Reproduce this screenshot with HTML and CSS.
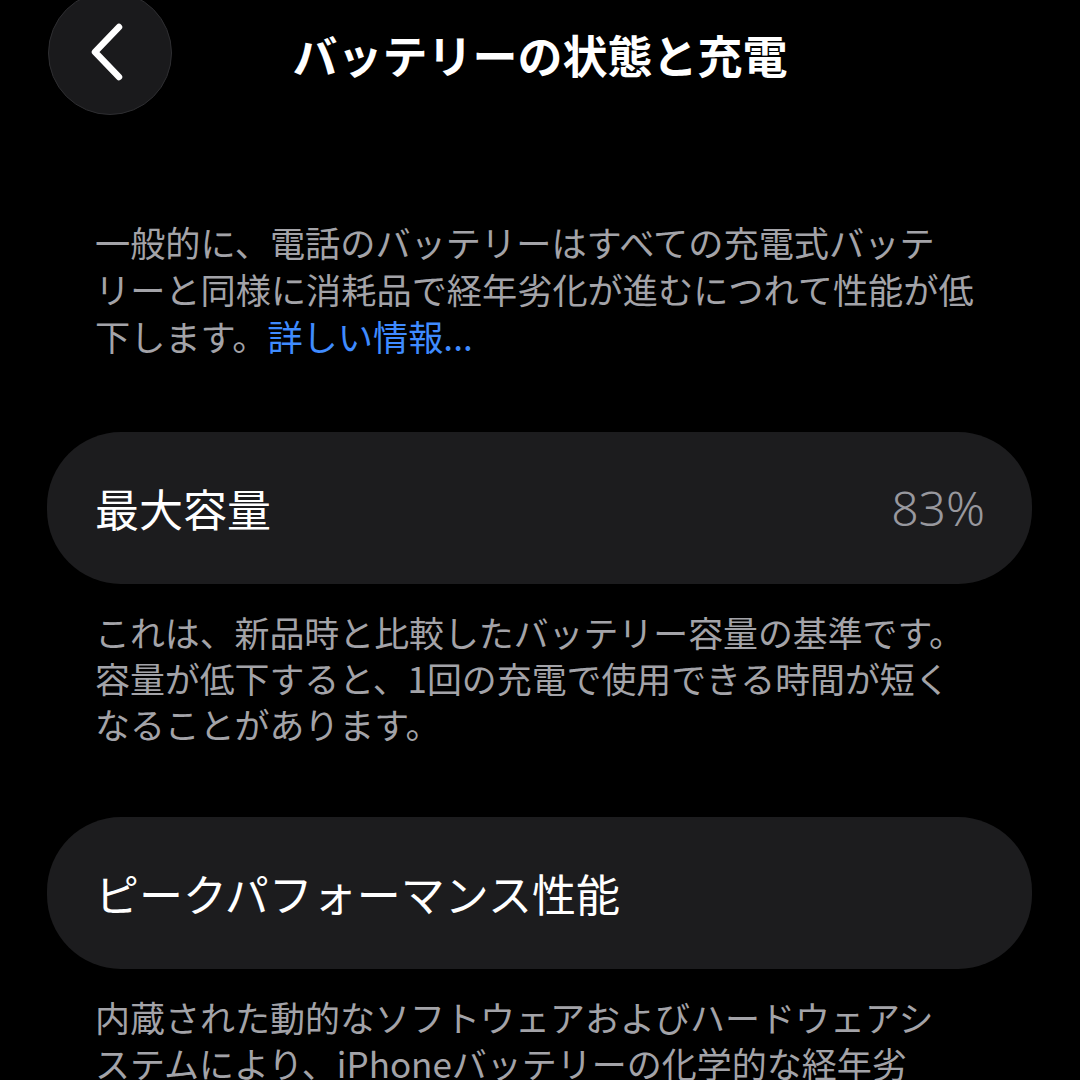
FILE: index.html
```html
<!DOCTYPE html>
<html lang="ja">
<head>
<meta charset="utf-8">
<title>バッテリーの状態と充電</title>
<link rel="stylesheet" href="styles.css">
</head>
<body>
<div class="screen">
  <header class="nav">
    <div class="nav-left">
      <button class="back" aria-label="戻る">
        <svg width="40" height="62" viewBox="0 0 40 62"><path d="M32 5 L8 30 L32 55" fill="none" stroke="#fff" stroke-width="6.5" stroke-linecap="round" stroke-linejoin="round"/></svg>
      </button>
    </div>
    <h1 class="title">バッテリーの状態と充電</h1>
    <div class="nav-right"></div>
  </header>

  <p class="note note-intro">一般的に、電話のバッテリーはすべての充電式バッテ<br>リーと同様に消耗品で経年劣化が進むにつれて性能が低<br>下します。<span class="link">詳しい情報...</span></p>

  <div class="card">
    <span class="card-label">最大容量</span>
    <span class="card-value">83%</span>
  </div>

  <p class="note note-cap">これは、新品時と比較したバッテリー容量の基準です。<br>容量が低下すると、1回の充電で使用できる時間が短く<br>なることがあります。</p>

  <div class="card card-second">
    <span class="card-label">ピークパフォーマンス性能</span>
  </div>

  <p class="note note-peak">内蔵された動的なソフトウェアおよびハードウェアシ<br>ステムにより、iPhoneバッテリーの化学的な経年劣<br>化による性能への影響を軽減します。</p>
</div>
</body>
</html>
```

FILE: styles.css
```css
html, body {
  margin: 0;
  padding: 0;
  background: #000;
}
body {
  width: 1080px;
  height: 1080px;
  overflow: hidden;
  font-family: "Noto Sans CJK JP", "Noto Sans", sans-serif;
  color: #fff;
}
.screen {
  display: flex;
  flex-direction: column;
}
.nav {
  display: grid;
  grid-template-columns: 1fr auto 1fr;
  align-items: center;
  margin-top: -9px;
  height: 124px;
}
.nav-left {
  padding-left: 48px;
  display: flex;
}
.back {
  width: 124px;
  height: 124px;
  border-radius: 50%;
  background: #1a1a1c;
  border: 1.5px solid #2e2e31;
  box-sizing: border-box;
  display: flex;
  align-items: center;
  justify-content: center;
  padding: 0 6px 0 0;
  margin: 0;
}
.title {
  margin: 0;
  font-size: 45px;
  font-weight: 700;
  line-height: 1;
  padding-top: 2px;
  letter-spacing: 0;
}
.note {
  margin: 0;
  padding: 0 40px 0 95px;
  color: #a3a3a8;
  white-space: nowrap;
}
.note-intro {
  margin-top: 103px;
  font-size: 35.2px;
  line-height: 47px;
}
.link {
  color: #3f8bff;
}
.card {
  margin: 0 48px 0 47px;
  height: 152px;
  border-radius: 74px;
  background: #1c1c1e;
  display: flex;
  align-items: center;
  justify-content: space-between;
  padding: 0 47px 0 48px;
  box-sizing: border-box;
  margin-top: 73px;
}
.card-label {
  font-size: 44px;
  line-height: 1;
}
.card-value {
  font-size: 48px;
  font-weight: 300;
  line-height: 1;
  color: #98989e;
  font-family: "Noto Sans", "Noto Sans CJK JP", sans-serif;
}
.note-cap {
  margin-top: 25px;
  font-size: 34.9px;
  line-height: 46px;
}
.card-second {
  margin-top: 70px;
}
.note-peak {
  margin-top: 25px;
  font-size: 35px;
  line-height: 46px;
}
```
